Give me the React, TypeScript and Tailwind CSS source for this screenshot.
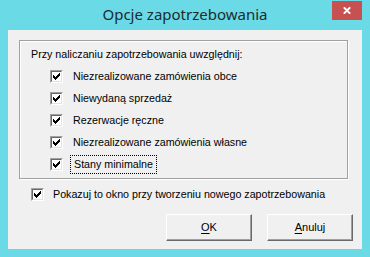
import React from "react";

function Check() {
  // klasyczny znaczek 7x7
  const px = [
    [6, 0],
    [5, 1], [6, 1],
    [0, 2], [4, 2], [5, 2], [6, 2],
    [0, 3], [1, 3], [3, 3], [4, 3], [5, 3],
    [0, 4], [1, 4], [2, 4], [3, 4], [4, 4],
    [1, 5], [2, 5], [3, 5],
    [2, 6],
  ];
  return (
    <span className="relative inline-block w-[13px] h-[13px] shrink-0 bg-white border border-t-[#a0a0a0] border-l-[#a0a0a0] border-r-white border-b-white">
      <span className="absolute inset-0 border border-t-[#696969] border-l-[#696969] border-r-[#e3e3e3] border-b-[#e3e3e3]" />
      <svg className="absolute left-[2px] top-[2px]" width="7" height="7" viewBox="0 0 7 7" shapeRendering="crispEdges">
        {px.map(([x, y], i) => (
          <rect key={i} x={x} y={y} width="1" height="1" fill="#000" />
        ))}
      </svg>
    </span>
  );
}

function Button({ children }: { children: React.ReactNode }) {
  return (
    <button className="w-[86px] h-[27px] bg-[#f0f0f0] border border-t-white border-l-white border-r-[#696969] border-b-[#696969] shadow-[inset_-1px_-1px_0_#a0a0a0] text-[11px] text-black">
      {children}
    </button>
  );
}

export default function App() {
  const opcje = [
    "Niezrealizowane zamówienia obce",
    "Niewydaną sprzedaż",
    "Rezerwacje ręczne",
    "Niezrealizowane zamówienia własne",
    "Stany minimalne",
  ];

  return (
    <div className="w-[370px] h-[257px] bg-[#69dae6] flex flex-col font-['Liberation_Sans',Arial,sans-serif] text-[10.7px] text-black">
      {/* pasek tytułu */}
      <div className="relative h-[30px] flex items-center justify-center">
        <span className="font-['Noto_Sans',sans-serif] text-[15px] text-[#1e2b2e] leading-none -mt-[1px]">
          Opcje zapotrzebowania
        </span>
        <div className="absolute right-[8px] top-[1px] w-[30px] h-[19px] bg-[#c75050] flex items-center justify-center">
          <svg width="8" height="7" viewBox="0 0 8 7">
            <path d="M0.8 0.3l6.4 6.4M7.2 0.3l-6.4 6.4" stroke="white" strokeWidth="1.9" />
          </svg>
        </div>
      </div>

      {/* obszar klienta */}
      <div className="mx-[8px] mb-[8px] flex-1 bg-[#f0f0f0] flex flex-col">
        <div className="ml-[11px] mt-[10px] w-[329px] h-[139px] border border-[#a0a0a0] shadow-[1px_1px_0_white,inset_1px_1px_0_white] pl-[11px] pt-[7px]">
          <div className="leading-[13px]">Przy naliczaniu zapotrzebowania uwzględnij:</div>
          <div className="flex flex-col mt-[4px]">
            {opcje.map((o, i) => (
              <div key={i} className="h-[22px] flex items-center pl-[19px]">
                <Check />
                <span
                  className={`ml-[10px] leading-[13px] ${
                    i === 4 ? "outline outline-1 outline-dotted outline-black outline-offset-[2px] px-[1px]" : ""
                  }`}
                >
                  {o}
                </span>
              </div>
            ))}
          </div>
        </div>

        <div className="flex items-center ml-[23px] mt-[8px] h-[14px]">
          <Check />
          <span className="ml-[9px] leading-[13px]">Pokazuj to okno przy tworzeniu nowego zapotrzebowania</span>
        </div>

        <div className="flex justify-end gap-[15px] mr-[9px] mt-[13px]">
          <Button>
            <span className="underline underline-offset-2">O</span>K
          </Button>
          <Button>
            <span className="underline underline-offset-2">A</span>nuluj
          </Button>
        </div>
      </div>
    </div>
  );
}
